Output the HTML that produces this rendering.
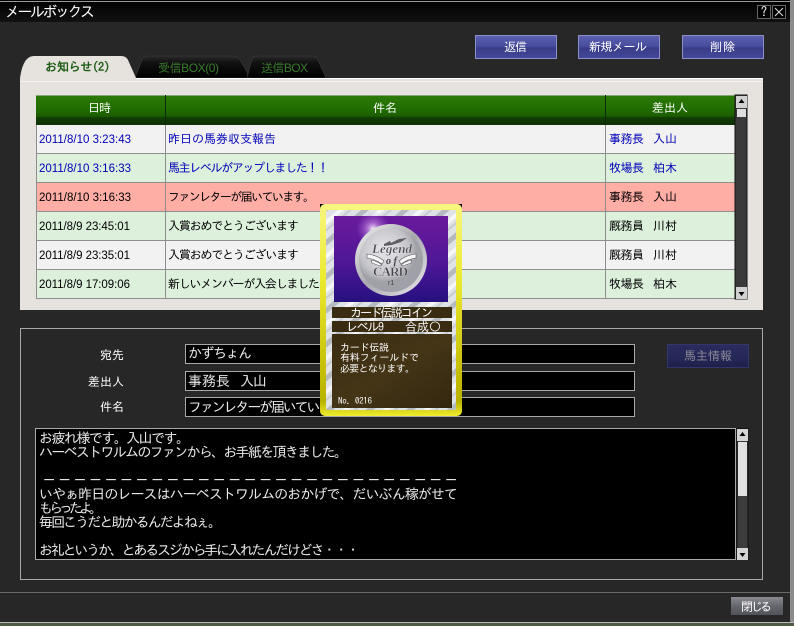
<!DOCTYPE html>
<html lang="ja"><head><meta charset="utf-8"><title>メールボックス</title>
<style>
html,body{margin:0;padding:0;background:#272727;width:794px;height:626px;overflow:hidden}
svg{display:block}
text{font-family:"Liberation Sans","IPAGothic","Noto Sans CJK JP",sans-serif;font-size:12px;white-space:pre}
.j{font-family:"IPAGothic","Noto Sans CJK JP",sans-serif}
.d{font-size:11.5px}
.w{fill:#fff}.b{fill:#0000b8}.k{fill:#000}.m{font-size:14px;fill:#e8e8e8;font-family:"IPAGothic","Noto Sans CJK JP",sans-serif}
.c{font-size:10px;fill:#fff;font-family:"IPAGothic","Noto Sans CJK JP",sans-serif}
</style></head><body>
<svg width="794" height="626" viewBox="0 0 794 626" xmlns="http://www.w3.org/2000/svg">
<defs>
<linearGradient id="tb" x1="0" y1="0" x2="0" y2="1"><stop offset="0" stop-color="#000"/><stop offset="1" stop-color="#111"/></linearGradient>
<linearGradient id="hd" x1="0" y1="0" x2="0" y2="1"><stop offset="0" stop-color="#2c7a08"/><stop offset=".5" stop-color="#216c00"/><stop offset=".72" stop-color="#1a5a00"/><stop offset=".75" stop-color="#123c04"/><stop offset="1" stop-color="#0f3205"/></linearGradient>
<linearGradient id="bt" x1="0" y1="0" x2="0" y2="1"><stop offset="0" stop-color="#5a5fae"/><stop offset=".45" stop-color="#4a4e9e"/><stop offset=".55" stop-color="#383c88"/><stop offset="1" stop-color="#44489a"/></linearGradient>
<linearGradient id="bd" x1="0" y1="0" x2="0" y2="1"><stop offset="0" stop-color="#2a2c5c"/><stop offset=".5" stop-color="#26285a"/><stop offset="1" stop-color="#1e2048"/></linearGradient>
<linearGradient id="cl" x1="0" y1="0" x2="0" y2="1"><stop offset="0" stop-color="#8a8a92"/><stop offset=".5" stop-color="#66666e"/><stop offset="1" stop-color="#52525c"/></linearGradient>
<linearGradient id="t1" x1="0" y1="0" x2="0" y2="1"><stop offset="0" stop-color="#2a2a2a"/><stop offset=".3" stop-color="#111"/><stop offset="1" stop-color="#000"/></linearGradient>
<linearGradient id="yl" x1="0" y1="0" x2="0" y2="1"><stop offset="0" stop-color="#f8f680"/><stop offset=".35" stop-color="#ecea30"/><stop offset=".75" stop-color="#c8c20c"/><stop offset=".93" stop-color="#b8b200"/><stop offset="1" stop-color="#f0ee30"/></linearGradient>
<pattern id="sv" width="26" height="26" patternUnits="userSpaceOnUse" patternTransform="rotate(-40)"><rect width="26" height="26" fill="#dfe3e6"/><rect width="26" height="5" y="3" fill="#b4bac0"/><rect width="26" height="4" y="14" fill="#f4f6f8"/><rect width="26" height="2" y="21" fill="#c8ccd0"/></pattern>
<linearGradient id="pp" x1="0" y1="0" x2="0" y2="1"><stop offset="0" stop-color="#6a1a9c"/><stop offset=".55" stop-color="#4e1796"/><stop offset="1" stop-color="#261080"/></linearGradient>
<radialGradient id="gl"><stop offset="0" stop-color="#fff" stop-opacity=".95"/><stop offset=".4" stop-color="#d8a0f0" stop-opacity=".5"/><stop offset="1" stop-color="#a060e0" stop-opacity="0"/></radialGradient>
<linearGradient id="cn" x1="0" y1="0" x2="1" y2="1"><stop offset="0" stop-color="#f4f4f4"/><stop offset=".5" stop-color="#a8a8ae"/><stop offset="1" stop-color="#ececf0"/></linearGradient>
<radialGradient id="cf" cx=".4" cy=".35"><stop offset="0" stop-color="#e8e8ec"/><stop offset=".75" stop-color="#c4c4ca"/><stop offset="1" stop-color="#a0a0a8"/></radialGradient>
<linearGradient id="br" x1="0" y1="0" x2="1" y2="1"><stop offset="0" stop-color="#3a2c10"/><stop offset=".5" stop-color="#443517"/><stop offset="1" stop-color="#33270e"/></linearGradient>
</defs>

<rect width="794" height="626" fill="#272727"/>
<rect x="0" y="0" width="794" height="22" fill="url(#tb)"/>
<rect x="0" y="1" width="794" height="1" fill="#9a9a9a"/>
<rect x="790" y="0" width="4" height="626" fill="#8c8c8c"/>
<rect x="0" y="622" width="794" height="1" fill="#b8b8b8"/>
<rect x="0" y="623" width="794" height="3" fill="#4e5a44"/>
<text class="j w" x="5" y="17" style="font-size:15px" textLength="90">メールボックス</text>

<rect x="757.5" y="5.5" width="13" height="13" fill="#000" stroke="#666"/>
<text class="j w" x="761" y="16" textLength="6">?</text>
<rect x="772.5" y="5.5" width="13" height="13" fill="#000" stroke="#666"/>
<path d="M775 8l8 8M783 8l-8 8" stroke="#ddd" fill="none"/>

<g stroke="#8c8ec8" stroke-width="1">
<rect x="475.5" y="35.5" width="81" height="23" fill="url(#bt)"/>
<rect x="578.5" y="35.5" width="81" height="23" fill="url(#bt)"/>
<rect x="682.5" y="35.5" width="81" height="23" fill="url(#bt)"/>
</g>
<text class="j w" x="504" y="51" textLength="23">返信</text>
<text class="j w" x="589" y="51" textLength="58">新規メール</text>
<text class="j w" x="710" y="51" textLength="25">削除</text>

<path d="M247 78 L252 59 Q253 56 257 56 L312 56 Q316 56 318 60 L326 78 Z" fill="url(#t1)" stroke="#3a3a3a" stroke-width=".6"/>
<path d="M135 78 L142 60 Q144 56 148 56 L232 56 Q237 56 240 60 L247 72 L248 78 Z" fill="url(#t1)" stroke="#3a3a3a" stroke-width=".6"/>
<text x="158" y="72" fill="#3a7a2e" textLength="61">受信BOX(0)</text>
<text x="261" y="72" fill="#3a7a2e" textLength="47">送信BOX</text>

<path d="M20 78 Q22 64 27 59 Q30 56 34 56 L121 56 Q126 56 128 60 L136 78 Z" fill="#e6e2de"/>
<rect x="20" y="78" width="743" height="232" fill="#e6e2de"/>
<rect x="136" y="78" width="627" height="1" fill="#fff"/>
<rect x="20" y="81" width="743" height="1" fill="#f4f2f0"/>
<text class="j" x="45" y="71" fill="#1a5a10" stroke="#1a5a10" stroke-width=".45" textLength="65">お知らせ(2)</text>

<rect x="36" y="95" width="699" height="30" fill="url(#hd)"/>
<rect x="36" y="95" width="699" height="1" fill="#86a878"/>
<rect x="165" y="95" width="1" height="30" fill="#0a2a04"/>
<rect x="605" y="95" width="1" height="30" fill="#0a2a04"/>
<text class="j w" x="88" y="112" textLength="23">日時</text>
<text class="j w" x="373" y="112" textLength="24">件名</text>
<text class="j w" x="652" y="112" textLength="36">差出人</text>

<rect x="36" y="125" width="699" height="28" fill="#f2f2f2"/>
<rect x="36" y="153" width="699" height="29" fill="#dcf0dc"/>
<rect x="36" y="182" width="699" height="29" fill="#ffaea6"/>
<rect x="36" y="211" width="699" height="29" fill="#dcf0dc"/>
<rect x="36" y="240" width="699" height="29" fill="#f2f2f2"/>
<rect x="36" y="269" width="699" height="29" fill="#dcf0dc"/>
<g fill="#8e8e8e">
<rect x="36" y="153" width="699" height="1"/><rect x="36" y="182" width="699" height="1"/><rect x="36" y="211" width="699" height="1"/><rect x="36" y="240" width="699" height="1"/><rect x="36" y="269" width="699" height="1"/><rect x="36" y="298" width="699" height="1"/>
<rect x="165" y="125" width="1" height="173"/><rect x="605" y="125" width="1" height="173"/><rect x="36" y="125" width="1" height="173"/>
</g>

<text class="b d" x="39" y="143" textLength="92">2011/8/10 3:23:43</text>
<text class="b d" x="39" y="172" textLength="92">2011/8/10 3:16:33</text>
<text class="k d" x="39" y="201" textLength="92">2011/8/10 3:16:33</text>
<text class="k d" x="39" y="230" textLength="91">2011/8/9 23:45:01</text>
<text class="k d" x="39" y="259" textLength="91">2011/8/9 23:35:01</text>
<text class="k d" x="39" y="288" textLength="91">2011/8/9 17:09:06</text>

<text class="j b" x="168" y="143" textLength="108">昨日の馬券収支報告</text>
<text class="j b" x="168" y="172" textLength="161">馬主レベルがアップしました！！</text>
<text class="j k" x="168" y="201" textLength="147">ファンレターが届いています。</text>
<text class="j k" x="168" y="230" textLength="131">入賞おめでとうございます</text>
<text class="j k" x="168" y="259" textLength="131">入賞おめでとうございます</text>
<text class="j k" x="168" y="288" textLength="152">新しいメンバーが入会しました</text>

<text class="j b" x="609" y="143" textLength="35">事務長</text><text class="j b" x="653" y="143" textLength="24">入山</text>
<text class="j b" x="609" y="172" textLength="35">牧場長</text><text class="j b" x="653" y="172" textLength="24">柏木</text>
<text class="j k" x="609" y="201" textLength="35">事務長</text><text class="j k" x="653" y="201" textLength="24">入山</text>
<text class="j k" x="609" y="230" textLength="35">厩務員</text><text class="j k" x="653" y="230" textLength="24">川村</text>
<text class="j k" x="609" y="259" textLength="35">厩務員</text><text class="j k" x="653" y="259" textLength="24">川村</text>
<text class="j k" x="609" y="288" textLength="35">牧場長</text><text class="j k" x="653" y="288" textLength="24">柏木</text>

<rect x="735" y="95" width="12" height="204" fill="#3a3a3a" stroke="#111" stroke-width="1"/>
<rect x="736" y="96" width="11" height="12" fill="#d0d0d0"/>
<path d="M741.5 99l3 4h-6z" fill="#000"/>
<rect x="737" y="109" width="9" height="8" fill="#dedede"/>
<rect x="736" y="287" width="11" height="12" fill="#d0d0d0"/>
<path d="M741.5 296l3-4h-6z" fill="#000"/>

<rect x="20.5" y="328.5" width="742" height="251" fill="none" stroke="#a8a8a8"/>
<text class="j w" x="100" y="359" textLength="24">宛先</text>
<text class="j w" x="88" y="386" textLength="36">差出人</text>
<text class="j w" x="100" y="411" textLength="24">件名</text>
<g fill="#000" stroke="#a8a8a8">
<rect x="185.5" y="344.5" width="449" height="19"/>
<rect x="185.5" y="371.5" width="449" height="19"/>
<rect x="185.5" y="397.5" width="449" height="19"/>
</g>
<text class="m" x="188" y="358" textLength="64">かずちょん</text>
<text class="m" x="188" y="386" textLength="42">事務長</text>
<text class="m" x="240" y="386" textLength="27">入山</text>
<text class="m" x="188" y="412" textLength="168">ファンレターが届いています。</text>

<rect x="667.5" y="344.5" width="81" height="23" fill="url(#bd)" stroke="#34366a"/>
<text class="j" x="684" y="360" fill="#8a8a96" textLength="48">馬主情報</text>

<rect x="35.5" y="428.5" width="700" height="131" fill="#000" stroke="#a8a8a8"/>
<text class="m" x="39" y="443" textLength="151">お疲れ様です。入山です。</text>
<text class="m" x="39" y="457" textLength="309">ハーベストワルムのファンから、お手紙を頂きました。</text>
<text class="m" x="42" y="485" textLength="416">－－－－－－－－－－－－－－－－－－－－－－－－－－－</text>
<text class="m" x="39" y="499" textLength="419">いやぁ昨日のレースはハーベストワルムのおかげで、だいぶん稼がせて</text>
<text class="m" x="39" y="513" textLength="64">もらったよ。</text>
<text class="m" x="39" y="527" textLength="183">毎回こうだと助かるんだよねぇ。</text>
<text class="m" x="39" y="555" textLength="321">お礼というか、とあるスジから手に入れたんだけどさ・・・</text>

<rect x="737" y="428.5" width="11" height="131" fill="#3c3c3c" stroke="#111"/>
<rect x="737" y="429" width="11" height="12" fill="#d4d4d4"/>
<path d="M742.5 432l3 4h-6z" fill="#000"/>
<rect x="738" y="442" width="9" height="54" fill="#e0e0e0"/>
<rect x="737" y="548" width="11" height="12" fill="#d4d4d4"/>
<path d="M742.5 557l3-4h-6z" fill="#000"/>

<rect x="0" y="592" width="790" height="1" fill="#6a6a6a"/>
<rect x="731" y="597" width="52" height="18" fill="url(#cl)"/>
<text class="j w" x="741" y="611" textLength="31">閉じる</text>

<!-- card -->
<rect x="320" y="204" width="5" height="5" fill="#000"/><rect x="457" y="204" width="5" height="5" fill="#000"/>
<rect x="320" y="204" width="142" height="212" rx="5" fill="url(#yl)"/>
<rect x="326" y="210" width="130" height="200" rx="2" fill="url(#sv)"/>
<rect x="334" y="216" width="114" height="86" fill="url(#pp)"/>
<circle cx="373" cy="229" r="17" fill="url(#gl)"/>
<circle cx="391" cy="260" r="36" fill="url(#cn)"/>
<circle cx="391" cy="260" r="32" fill="url(#cf)"/>
<path d="M367 254q10 1 17 7l-2 3q-7-5-15-6zM416 254q-10 1-17 7l2 3q7-5 15-6zM371 260q6 1 11 5l-2 1q-5-2-8-3zM412 260q-6 1-11 5l2 1q5-2 8-3z" fill="#f6f6f6" stroke="#55555c" stroke-width=".6"/>
<path d="M384 244l6-3 1 2 8-4 8-1-6 4-9 3-8 1z" fill="#5e5e66"/>
<text x="372" y="253" style="font-family:'Liberation Serif',serif;font-size:13px;font-weight:bold;font-style:italic" fill="#44444c" stroke="#f4f4f4" stroke-width=".25" textLength="40">Legend</text>
<text x="386" y="264" style="font-family:'Liberation Serif',serif;font-size:10px;font-weight:bold;font-style:italic" fill="#44444c" textLength="11">of</text>
<text x="373" y="276" style="font-family:'Liberation Serif',serif;font-size:13px;font-weight:bold" fill="#44444c" stroke="#f4f4f4" stroke-width=".25" textLength="35">CARD</text>
<text x="388" y="285" style="font-size:7px" fill="#444">r1</text>

<rect x="332" y="307" width="120" height="11" fill="#3a2c10"/>
<rect x="332" y="321" width="120" height="11" fill="#3a2c10"/>
<rect x="332" y="334" width="120" height="74" fill="url(#br)"/>
<text class="j w" x="350" y="317" style="font-size:12px" textLength="83">カード伝説コイン</text>
<text class="j w" x="346" y="331" style="font-size:12px" textLength="38">レベル9</text>
<text class="j w" x="405" y="331" style="font-size:12px" textLength="36">合成○</text>
<text class="c" x="340" y="351" textLength="49">カード伝説</text>
<text class="c" x="340" y="361" textLength="79">有料フィールドで</text>
<text class="c" x="340" y="372" textLength="75">必要となります。</text>
<text class="c" x="338" y="404" style="font-size:9px" textLength="34">No. 0216</text>
</svg>
</body></html>
